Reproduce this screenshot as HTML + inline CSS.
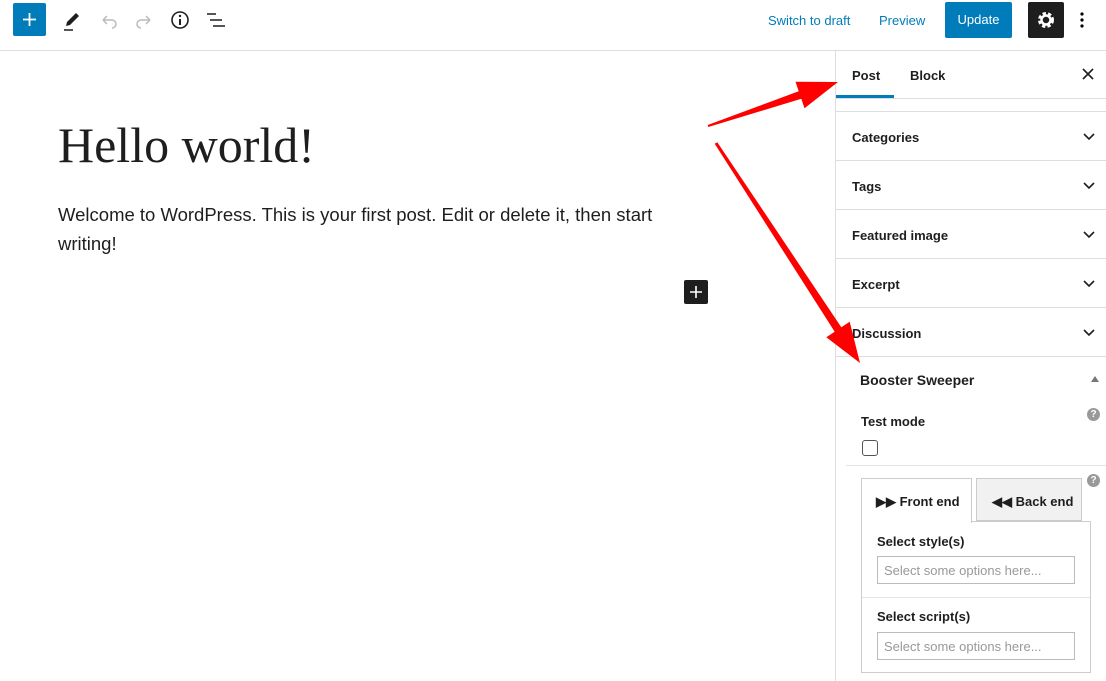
<!DOCTYPE html><html><head><style>
*{box-sizing:border-box;margin:0;padding:0}
body{width:1106px;height:681px;overflow:hidden;background:#fff;font-family:"Liberation Sans",sans-serif;color:#1e1e1e;position:relative}
.top{position:absolute;left:0;top:0;width:1106px;height:51px;border-bottom:1px solid #ddd}
.abs{position:absolute}
.lnk{color:#007cba;font-size:13px}
.side{position:absolute;left:835px;top:51px;width:271px;height:630px;border-left:1px solid #ddd}
.row{position:absolute;left:0;width:271px;height:49px;border-top:1px solid #ddd;font-size:13px;font-weight:bold;padding:18px 0 0 16px}
.chev{position:absolute;right:12px;top:18px}
.b{font-weight:bold;font-size:13px}
.inp{position:absolute;width:198px;height:28px;border:1px solid #bbb;font-size:13px;color:#999;padding:6px 0 0 6px}
</style></head><body>
<div class="top">
 <div class="abs" style="left:13px;top:3px;width:33px;height:33px;background:#007cba;border-radius:2px"><svg width="33" height="33"><path d="M16.5 10v13M10 16.5h13" stroke="#fff" stroke-width="1.8"/></svg></div>
 <svg class="abs" style="left:60px;top:8px" width="24" height="24"><path d="M6 18l1-4 9-9 3 3-9 9z" fill="#1e1e1e"/><path d="M4 22h9" stroke="#1e1e1e" stroke-width="1.5"/></svg>
 <svg class="abs" style="left:97px;top:8px" width="24" height="24"><path d="M6 12h9a4 4 0 0 1 0 8M6 12l4-4M6 12l4 4" stroke="#bbb" stroke-width="1.5" fill="none"/></svg>
 <svg class="abs" style="left:132px;top:8px" width="24" height="24"><path d="M18 12H9a4 4 0 0 0 0 8M18 12l-4-4M18 12l-4 4" stroke="#bbb" stroke-width="1.5" fill="none"/></svg>
 <svg class="abs" style="left:168px;top:8px" width="24" height="24"><circle cx="12" cy="12" r="8" stroke="#1e1e1e" stroke-width="1.6" fill="none"/><path d="M12 11v6" stroke="#1e1e1e" stroke-width="2"/><circle cx="12" cy="8" r="1.2" fill="#1e1e1e"/></svg>
 <svg class="abs" style="left:204px;top:8px" width="24" height="24"><path d="M3 6h9M6 12h12M9 18h12" stroke="#1e1e1e" stroke-width="1.6"/></svg>
 <div class="abs lnk" style="left:768px;top:13px">Switch to draft</div>
 <div class="abs lnk" style="left:879px;top:13px">Preview</div>
 <div class="abs" style="left:945px;top:2px;width:67px;height:36px;background:#007cba;color:#fff;font-size:13px;text-align:center;line-height:36px;border-radius:2px">Update</div>
 <div class="abs" style="left:1028px;top:2px;width:36px;height:36px;background:#1e1e1e;border-radius:2px"><svg width="36" height="36"><circle cx="18" cy="18" r="6" fill="none" stroke="#fff" stroke-width="4" stroke-dasharray="3 2"/><circle cx="18" cy="18" r="4.5" fill="none" stroke="#fff" stroke-width="2.5"/></svg></div>
 <svg class="abs" style="left:1076px;top:10px" width="12" height="20"><circle cx="6" cy="4" r="1.6"/><circle cx="6" cy="10" r="1.6"/><circle cx="6" cy="16" r="1.6"/></svg>
</div>
<div class="abs" style="left:58px;top:116px;font-family:'Liberation Serif',serif;font-size:50px;font-weight:300">Hello world!</div>
<div class="abs" style="left:58px;top:200px;width:640px;font-size:18.5px;line-height:29px">Welcome to WordPress. This is your first post. Edit or delete it, then start writing!</div>
<div class="abs" style="left:684px;top:280px;width:24px;height:24px;background:#1e1e1e;border-radius:2px"><svg width="24" height="24"><path d="M12 6v12M6 12h12" stroke="#fff" stroke-width="1.6"/></svg></div>
<div class="side">
 <div class="abs b" style="left:16px;top:17px">Post</div>
 <div class="abs b" style="left:74px;top:17px">Block</div>
 <div class="abs" style="left:0;top:44px;width:58px;height:3px;background:#007cba"></div>
 <div class="abs" style="left:0;top:47px;width:271px;border-top:1px solid #ddd"></div>
 <svg class="abs" style="left:246px;top:17px" width="12" height="12"><path d="M1 1l10 10M11 1L1 11" stroke="#1e1e1e" stroke-width="1.6"/></svg>
 <div class="row" style="top:60px">Categories<svg class="chev" width="12" height="12"><path d="M1 4l5 5 5-5" stroke="#1e1e1e" stroke-width="1.6" fill="none"/></svg></div>
 <div class="row" style="top:109px">Tags<svg class="chev" width="12" height="12"><path d="M1 4l5 5 5-5" stroke="#1e1e1e" stroke-width="1.6" fill="none"/></svg></div>
 <div class="row" style="top:158px">Featured image<svg class="chev" width="12" height="12"><path d="M1 4l5 5 5-5" stroke="#1e1e1e" stroke-width="1.6" fill="none"/></svg></div>
 <div class="row" style="top:207px">Excerpt<svg class="chev" width="12" height="12"><path d="M1 4l5 5 5-5" stroke="#1e1e1e" stroke-width="1.6" fill="none"/></svg></div>
 <div class="row" style="top:256px">Discussion<svg class="chev" width="12" height="12"><path d="M1 4l5 5 5-5" stroke="#1e1e1e" stroke-width="1.6" fill="none"/></svg></div>
 <div class="abs" style="left:0;top:305px;width:271px;border-top:1px solid #ddd"></div>
 <div class="abs" style="left:24px;top:321px;font-size:14px;font-weight:bold">Booster Sweeper</div>
 <svg class="abs" style="left:254px;top:324px" width="10" height="8"><path d="M1 7l4-6 4 6z" fill="#777"/></svg>
 <div class="abs b" style="left:25px;top:363px">Test mode</div>
 <div class="abs" style="left:251px;top:357px;width:13px;height:13px;border-radius:50%;background:#999;color:#fff;font-size:10px;font-weight:bold;text-align:center;line-height:13px">?</div>
 <div class="abs" style="left:26px;top:389px;width:16px;height:16px;border:1px solid #555;border-radius:3px"></div>
 <div class="abs" style="left:10px;top:414px;width:261px;border-top:1px solid #e5e5e5"></div>
 <div class="abs" style="left:251px;top:423px;width:13px;height:13px;border-radius:50%;background:#999;color:#fff;font-size:10px;font-weight:bold;text-align:center;line-height:13px">?</div>
 <div class="abs" style="left:25px;top:470px;width:230px;height:152px;border:1px solid #ccc"></div>
 <div class="abs" style="left:25px;top:427px;width:111px;height:45px;border:1px solid #ccc;border-bottom:none;background:#fff;font-size:13px;font-weight:bold;padding:15px 0 0 14px">▶▶ Front end</div>
 <div class="abs" style="left:140px;top:427px;width:106px;height:43px;border:1px solid #ccc;background:#f1f1f1;font-size:13px;font-weight:bold;padding:15px 0 0 15px">◀◀ Back end</div>
 <div class="abs b" style="left:41px;top:483px">Select style(s)</div>
 <div class="inp" style="left:41px;top:505px">Select some options here...</div>
 <div class="abs" style="left:26px;top:546px;width:228px;border-top:1px solid #e5e5e5"></div>
 <div class="abs b" style="left:41px;top:558px">Select script(s)</div>
 <div class="inp" style="left:41px;top:581px">Select some options here...</div>
</div>
<svg class="abs" style="left:0;top:0" width="1106" height="681">
 <polygon fill="#f00" points="707.7,125 798.7,91.2 795.5,81.7 838,82 804.5,108.3 801.3,98.8 708.3,127"/>
 <polygon fill="#f00" points="717.3,142.2 841.3,327.3 849.7,321.8 860,363 826.3,337.2 834.7,331.7 714.7,143.8"/>
</svg>
</body></html>
